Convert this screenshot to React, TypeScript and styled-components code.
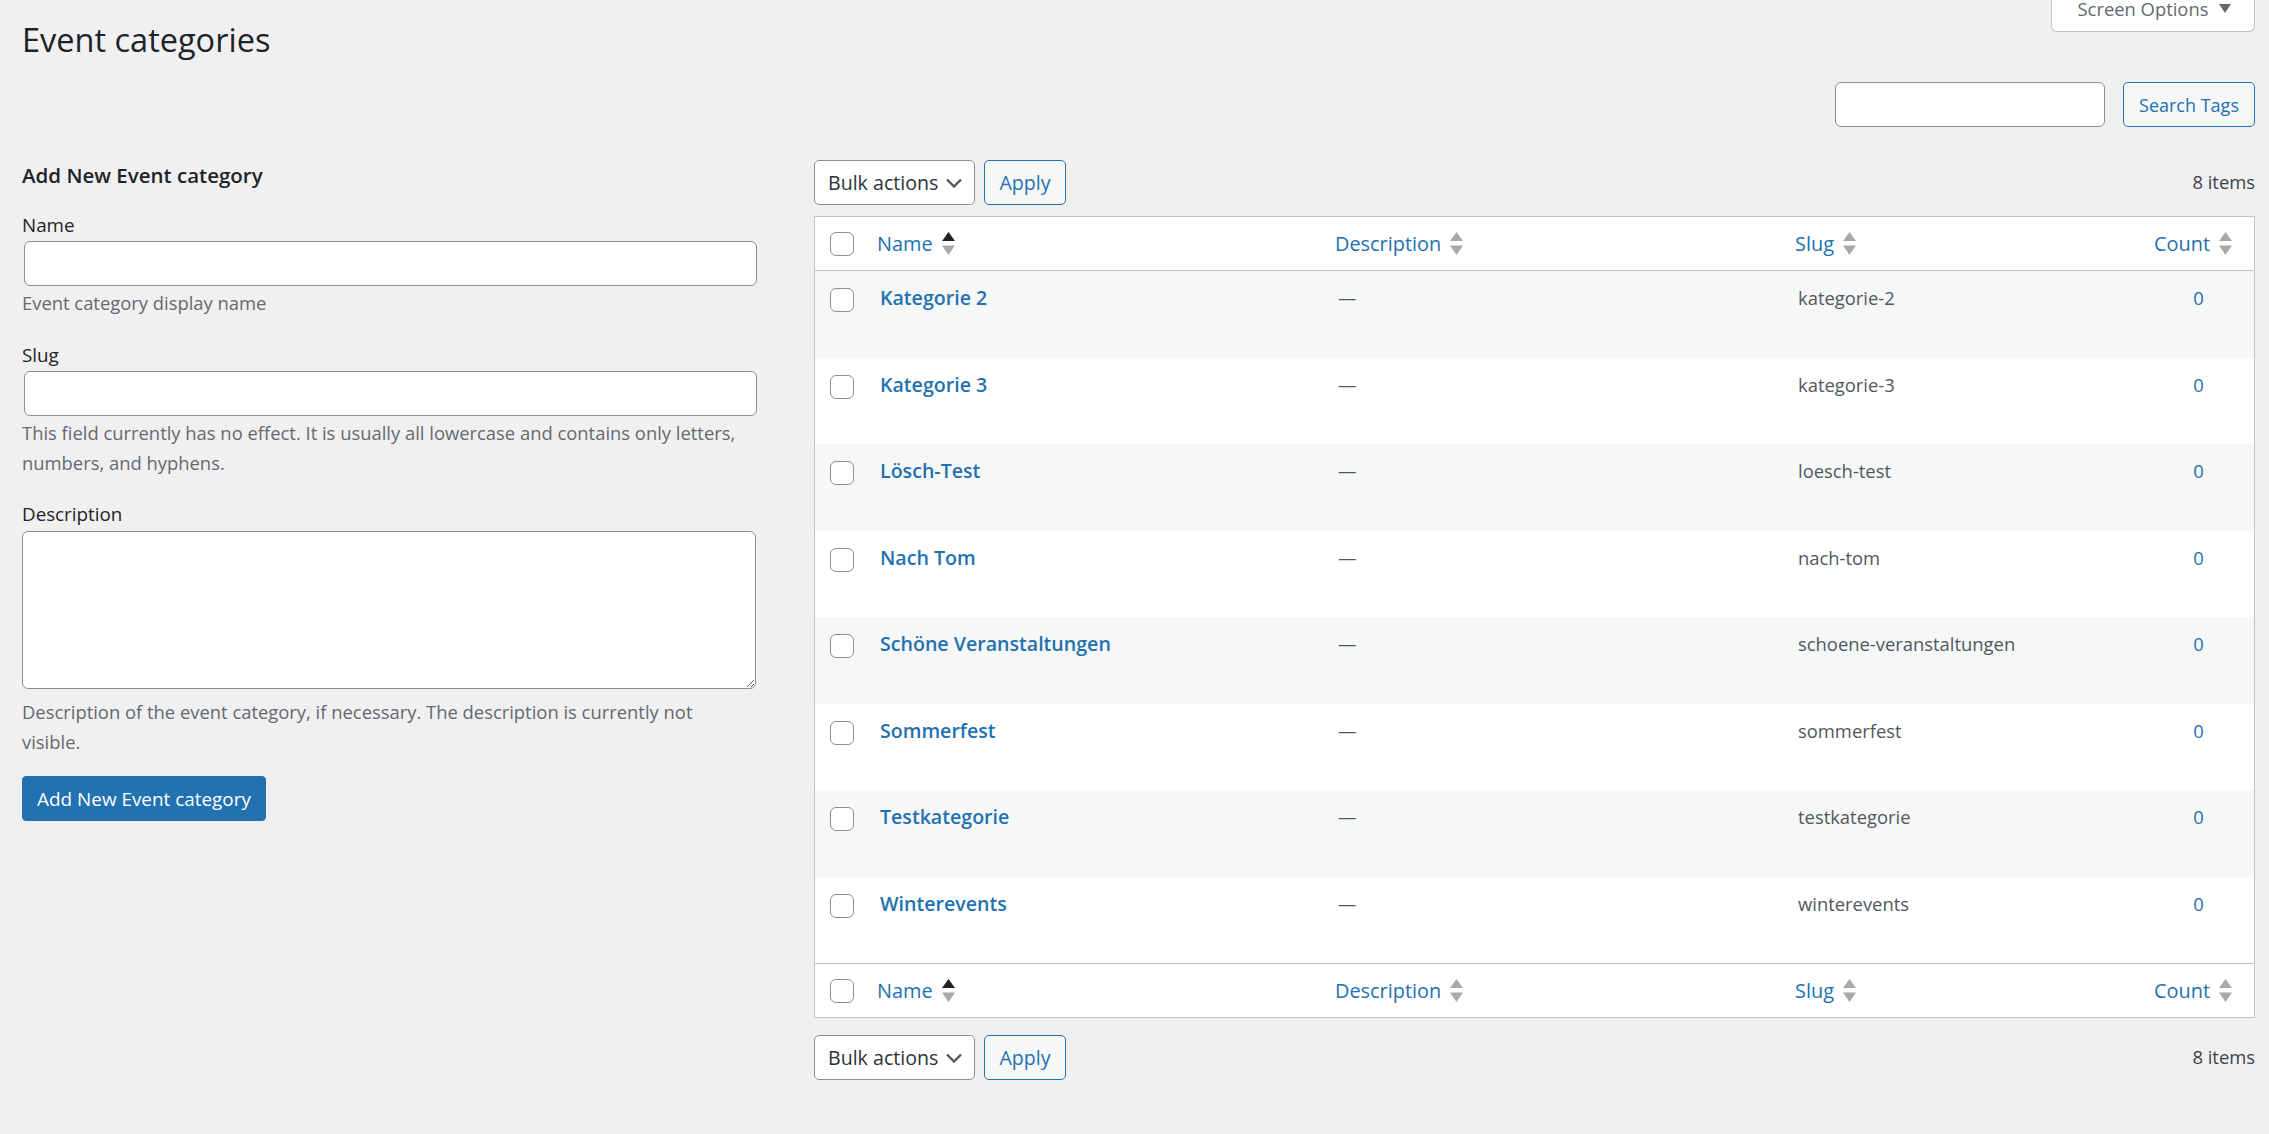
import styled, { createGlobalStyle } from 'styled-components'

const FONT = `"Open Sans", "Noto Sans", "Liberation Sans", sans-serif`
const FS = '18.4px'

const GlobalStyle = createGlobalStyle`
  html, body {
    margin: 0;
    padding: 0;
    height: 100%;
    overflow: hidden;
    background: #f0f0f1;
    color: #3c434a;
    font-family: ${FONT};
    font-size: ${FS};
  }
  * { box-sizing: border-box; }
`

const Page = styled.div`
  padding: 0 14px 0 22px;
`

const Header = styled.header`
  display: flex;
  justify-content: space-between;
  align-items: flex-start;
  height: 82px;
`

const Title = styled.h1`
  margin: 17px 0 0;
  font-size: 32.5px;
  font-weight: 400;
  line-height: 45px;
  color: #1d2327;
`

const ScreenOptions = styled.button`
  display: flex;
  align-items: flex-end;
  justify-content: center;
  gap: 11px;
  width: 204px;
  height: 36px;
  margin-top: -4px;
  padding: 0 0 9px 3px;
  border: 1px solid #c3c4c7;
  border-top: 0;
  border-radius: 0 0 6px 6px;
  background: #fff;
  color: #646970;
  font: inherit;
  line-height: 26px;
`

const SearchRow = styled.div`
  display: flex;
  justify-content: flex-end;
  gap: 18px;
  margin-bottom: 33px;
`

const SearchInput = styled.input`
  width: 270px;
  height: 45px;
  border: 1px solid #8c8f94;
  border-radius: 6px;
  background: #fff;
`

const Columns = styled.div`
  display: flex;
  align-items: flex-start;
`

const FormCol = styled.div`
  flex: none;
  width: 735px;
  margin-right: 57px;
`

const FormTitle = styled.h2`
  margin: 0 0 24px;
  padding-top: 2px;
  font-size: 20.5px;
  font-weight: 600;
  line-height: 26px;
  color: #1d2327;
`

const Field = styled.div<{ $gap: number }>`
  margin-bottom: ${({ $gap }) => $gap}px;
`

const Label = styled.label`
  display: block;
  font-size: 18.8px;
  line-height: 26px;
  color: #1d2327;
`

const TextInput = styled.input`
  display: block;
  width: 733px;
  height: 45px;
  margin: 3px 0 0 2px;
  border: 1px solid #8c8f94;
  border-radius: 6px;
  background: #fff;
`

const TextArea = styled.textarea`
  display: block;
  width: 734px;
  height: 158px;
  margin: 4px 0 0 0;
  border: 1px solid #8c8f94;
  border-radius: 6px;
  background: #fff;
`

const Help = styled.p<{ $top?: number }>`
  max-width: 725px;
  margin: ${({ $top }) => $top ?? 2}px 0 0;
  line-height: 30px;
  color: #646970;
`

const PrimaryButton = styled.button`
  display: block;
  height: 45px;
  width: 244px;
  padding: 0;
  border: 1px solid #2271b1;
  border-radius: 4px;
  background: #2271b1;
  color: #fff;
  font: inherit;
  font-size: 18.9px;
`

const ListCol = styled.div`
  flex: 1;
  min-width: 0;
`

const TableNav = styled.div<{ $bottom?: boolean }>`
  display: flex;
  align-items: center;
  height: 45px;
  margin: ${({ $bottom }) => ($bottom ? '17px 0 0' : '0 0 11px')};
`

const SelectBox = styled.button`
  display: flex;
  align-items: center;
  justify-content: space-between;
  width: 161px;
  height: 45px;
  margin-right: 9px;
  padding: 0 12px 0 13px;
  border: 1px solid #8c8f94;
  border-radius: 5px;
  background: #fff;
  color: #2c3338;
  font: inherit;
  font-size: 19.6px;
`

const SecondaryButton = styled.button<{ $width: number; $size: number }>`
  width: ${({ $width }) => $width}px;
  height: 45px;
  padding: 0;
  border: 1px solid #2271b1;
  border-radius: 5px;
  background: #f6f7f7;
  color: #2271b1;
  font: inherit;
  font-size: ${({ $size }) => $size}px;
`

const Count = styled.span`
  margin-left: auto;
  padding-bottom: 3px;
  color: #3c434a;
`

const Table = styled.table`
  width: 100%;
  table-layout: fixed;
  border-collapse: separate;
  border-spacing: 0;
  border: 1px solid #c3c4c7;
  background: #fff;
`

const HeadCell = styled.th<{ $foot?: boolean }>`
  height: 54px;
  padding: 0 0 0 11px;
  font-weight: 400;
  text-align: left;
  ${({ $foot }) => ($foot ? 'border-top: 1px solid #c3c4c7;' : 'border-bottom: 1px solid #c3c4c7;')}
`

const HeadCheckCell = styled(HeadCell)`
  padding: 0 0 0 15px;
`

const SortLink = styled.a`
  display: inline-flex;
  align-items: center;
  gap: 9px;
  font-size: 19.9px;
  color: #2271b1;
  line-height: 26px;
`

const Arrows = styled.svg`
  flex: none;
  width: 13px;
  height: 23px;
`

const Row = styled.tr<{ $alt?: boolean }>`
  background: ${({ $alt }) => ($alt ? '#f6f7f7' : '#fff')};
`

const Cell = styled.td<{ $center?: boolean; $blue?: boolean }>`
  padding: 14px 0 0 14px;
  vertical-align: top;
  line-height: 26px;
  color: ${({ $blue }) => ($blue ? '#2271b1' : '#50575e')};
  ${({ $center }) => $center && 'text-align: center; padding-left: 0;'}
`

const CheckCell = styled.td<{ $h: number }>`
  height: ${({ $h }) => $h}px;
  padding: 17px 0 0 15px;
  vertical-align: top;
`

const Check = styled.input`
  appearance: none;
  display: block;
  width: 24px;
  height: 24px;
  margin: 0;
  border: 1px solid #8c8f94;
  border-radius: 6px;
  background: #fff;
`

const RowTitle = styled.a`
  font-size: 19.6px;
  font-weight: 600;
  color: #2271b1;
`

const ColWidth = styled.col<{ $w: number }>`
  width: ${({ $w }) => $w}px;
`

const ROW_H = 86.5

const terms = [
  ['Kategorie 2', 'kategorie-2'],
  ['Kategorie 3', 'kategorie-3'],
  ['Lösch-Test', 'loesch-test'],
  ['Nach Tom', 'nach-tom'],
  ['Schöne Veranstaltungen', 'schoene-veranstaltungen'],
  ['Sommerfest', 'sommerfest'],
  ['Testkategorie', 'testkategorie'],
  ['Winterevents', 'winterevents'],
]

const SortArrows = ({ active }: { active?: boolean }) => (
  <Arrows viewBox="0 0 13 23">
    <polygon points="6.5,0 13,9 0,9" fill={active ? '#1d2327' : '#a7aaad'} />
    <polygon points="0,13.5 13,13.5 6.5,23" fill="#a7aaad" />
  </Arrows>
)

const Chevron = () => (
  <svg width="16" height="10" viewBox="0 0 16 10">
    <path d="M1 1.5 8 8.5 15 1.5" fill="none" stroke="#50575e" strokeWidth="2.4" />
  </svg>
)

const HeadRow = ({ foot }: { foot?: boolean }) => (
  <tr>
    <HeadCheckCell $foot={foot}>
      <Check type="checkbox" />
    </HeadCheckCell>
    <HeadCell $foot={foot}>
      <SortLink>
        Name
        <SortArrows active />
      </SortLink>
    </HeadCell>
    <HeadCell $foot={foot}>
      <SortLink>
        Description
        <SortArrows />
      </SortLink>
    </HeadCell>
    <HeadCell $foot={foot}>
      <SortLink>
        Slug
        <SortArrows />
      </SortLink>
    </HeadCell>
    <HeadCell $foot={foot}>
      <SortLink>
        Count
        <SortArrows />
      </SortLink>
    </HeadCell>
  </tr>
)

const Nav = ({ bottom }: { bottom?: boolean }) => (
  <TableNav $bottom={bottom}>
    <SelectBox>
      Bulk actions
      <Chevron />
    </SelectBox>
    <SecondaryButton $width={82} $size={19.6}>
      Apply
    </SecondaryButton>
    <Count>8 items</Count>
  </TableNav>
)

export default function App() {
  return (
    <Page>
      <GlobalStyle />
      <Header>
        <Title>Event categories</Title>
        <ScreenOptions>
          Screen Options
          <svg width="12" height="9" viewBox="0 0 12 9" style={{ marginBottom: 9 }}>
            <polygon points="0,0 12,0 6,9" fill="#646970" />
          </svg>
        </ScreenOptions>
      </Header>
      <SearchRow>
        <SearchInput />
        <SecondaryButton $width={132} $size={18}>
          Search Tags
        </SecondaryButton>
      </SearchRow>
      <Columns>
        <FormCol>
          <FormTitle>Add New Event category</FormTitle>
          <Field $gap={24}>
            <Label>Name</Label>
            <TextInput />
            <Help>Event category display name</Help>
          </Field>
          <Field $gap={23}>
            <Label>Slug</Label>
            <TextInput />
            <Help>
              This field currently has no effect. It is usually all lowercase and contains only letters,
              numbers, and hyphens.
            </Help>
          </Field>
          <Field $gap={19}>
            <Label>Description</Label>
            <TextArea />
            <Help $top={8}>
              Description of the event category, if necessary. The description is currently not visible.
            </Help>
          </Field>
          <PrimaryButton>Add New Event category</PrimaryButton>
        </FormCol>
        <ListCol>
          <Nav />
          <Table>
            <colgroup>
              <ColWidth $w={51} />
              <ColWidth $w={458} />
              <ColWidth $w={460} />
              <ColWidth $w={359} />
              <ColWidth $w={111} />
            </colgroup>
            <thead>
              <HeadRow />
            </thead>
            <tbody>
              {terms.map(([name, slug], i) => (
                <Row key={slug} $alt={i % 2 === 0}>
                  <CheckCell $h={Math.round((i + 1) * ROW_H) - Math.round(i * ROW_H)}>
                    <Check type="checkbox" />
                  </CheckCell>
                  <Cell>
                    <RowTitle>{name}</RowTitle>
                  </Cell>
                  <Cell>—</Cell>
                  <Cell>{slug}</Cell>
                  <Cell $center $blue>
                    0
                  </Cell>
                </Row>
              ))}
            </tbody>
            <tfoot>
              <HeadRow foot />
            </tfoot>
          </Table>
          <Nav bottom />
        </ListCol>
      </Columns>
    </Page>
  )
}
